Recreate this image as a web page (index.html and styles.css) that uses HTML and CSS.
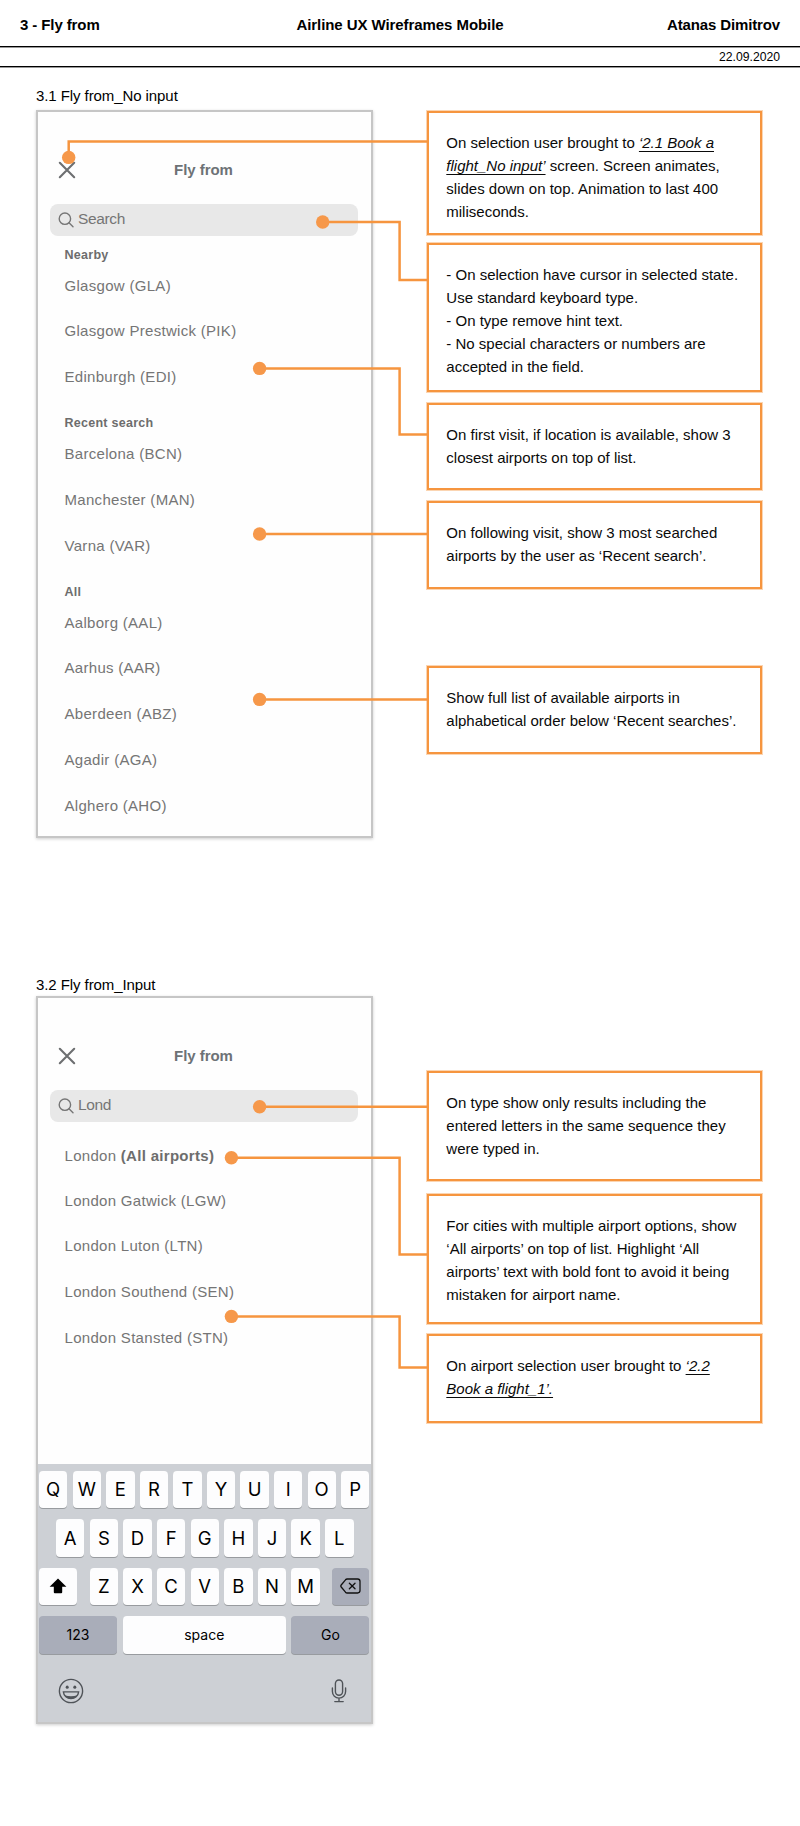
FILE: index.html
```html
<!DOCTYPE html>
<html lang="en">
<head>
<meta charset="utf-8">
<title>Airline UX Wireframes Mobile</title>
<link rel="stylesheet" href="styles.css">
</head>
<body>
<div class="page">
  <header class="head">
    <span class="head-left">3 - Fly from</span>
    <span class="head-mid">Airline UX Wireframes Mobile</span>
    <span class="head-right">Atanas Dimitrov</span>
  </header>
  <div class="date">22.09.2020</div>

  <section class="spec spec-a">
    <div class="screen-col">
      <h2 class="label">3.1 Fly from_No input</h2>
      <div class="phone">
        <div class="bar">
          <svg class="close" viewBox="0 0 18 18"><path d="M1.8 1.8 16.2 16.2M16.2 1.8 1.8 16.2"/></svg>
          <span class="title">Fly from</span>
        </div>
        <div class="search">
          <svg class="glass" viewBox="0 0 16 16"><circle cx="6.9" cy="6.7" r="5.7"/><path d="M11 10.8 15 14.8"/></svg>
          <span>Search</span>
        </div>
        <div class="group"><h3>Nearby</h3><p>Glasgow (GLA)</p><p>Glasgow Prestwick (PIK)</p><p>Edinburgh (EDI)</p></div>
        <div class="group"><h3>Recent search</h3><p>Barcelona (BCN)</p><p>Manchester (MAN)</p><p>Varna (VAR)</p></div>
        <div class="group"><h3>All</h3><p>Aalborg (AAL)</p><p>Aarhus (AAR)</p><p>Aberdeen (ABZ)</p><p>Agadir (AGA)</p><p>Alghero (AHO)</p></div>
      </div>
    </div>
    <div class="notes">
      <div class="note n1">On selection user brought to <em>‘2.1 Book a<br>flight_No input’</em> screen. Screen animates,<br>slides down on top. Animation to last 400<br>miliseconds.</div>
      <div class="note n2">- On selection have cursor in selected state.<br>Use standard keyboard type.<br>- On type remove hint text.<br>- No special characters or numbers are<br>accepted in the field.</div>
      <div class="note n3">On first visit, if location is available, show 3<br>closest airports on top of list.</div>
      <div class="note n4">On following visit, show 3 most searched<br>airports by the user as ‘Recent search’.</div>
      <div class="note n5">Show full list of available airports in<br>alphabetical order below ‘Recent searches’.</div>
    </div>
  </section>

  <section class="spec spec-b">
    <div class="screen-col">
      <h2 class="label">3.2 Fly from_Input</h2>
      <div class="phone">
        <div class="bar">
          <svg class="close" viewBox="0 0 18 18"><path d="M1.8 1.8 16.2 16.2M16.2 1.8 1.8 16.2"/></svg>
          <span class="title">Fly from</span>
        </div>
        <div class="search">
          <svg class="glass" viewBox="0 0 16 16"><circle cx="6.9" cy="6.7" r="5.7"/><path d="M11 10.8 15 14.8"/></svg>
          <span>Lond</span>
        </div>
        <div class="group results"><p class="first">London <b>(All airports)</b></p><p>London Gatwick (LGW)</p><p>London Luton (LTN)</p><p>London Southend (SEN)</p><p>London Stansted (STN)</p></div>
        <div class="keyboard">
          <div class="row"><kbd>Q</kbd><kbd>W</kbd><kbd>E</kbd><kbd>R</kbd><kbd>T</kbd><kbd>Y</kbd><kbd>U</kbd><kbd>I</kbd><kbd>O</kbd><kbd>P</kbd></div>
          <div class="row center"><kbd>A</kbd><kbd>S</kbd><kbd>D</kbd><kbd>F</kbd><kbd>G</kbd><kbd>H</kbd><kbd>J</kbd><kbd>K</kbd><kbd>L</kbd></div>
          <div class="row">
            <kbd class="side"><svg class="shift" viewBox="0 0 18 16"><path d="M9 .5 17.4 8.7H13.200V14.2Q13.200 15.2 12.200 15.2H5.800Q4.800 15.2 4.800 14.2V8.7H.6Z"/></svg></kbd>
            <div class="letters"><kbd>Z</kbd><kbd>X</kbd><kbd>C</kbd><kbd>V</kbd><kbd>B</kbd><kbd>N</kbd><kbd>M</kbd></div>
            <kbd class="side dark"><svg class="del" viewBox="0 0 21 16"><path d="M7.2 1H17.6Q20 1 20 3.4V12.6Q20 15 17.6 15H7.2Q6.2 15 5.5 14.2L1.2 9Q.4 8 1.2 7L5.5 1.8Q6.2 1 7.2 1ZM9.4 5.2 15 10.8M15 5.2 9.4 10.8"/></svg></kbd>
          </div>
          <div class="row"><kbd class="wide dark">123</kbd><kbd class="space">space</kbd><kbd class="wide dark">Go</kbd></div>
          <div class="tools">
            <svg class="smile" viewBox="0 0 26 26"><circle cx="13" cy="13" r="11.600"/><ellipse class="fill" cx="9.2" cy="9.2" rx="1.5" ry="1.6"/><ellipse class="fill" cx="16.8" cy="9.2" rx="1.5" ry="1.6"/><path d="M5.4 13.9H20.6C20.2 18 17 20.6 13 20.6S5.8 18 5.4 13.9Z"/><path class="fill" d="M6.6 17.2Q13 19.3 19.4 17.2C18.2 19.5 16 20.6 13 20.6S7.8 19.5 6.6 17.2Z"/></svg>
            <svg class="mic" viewBox="0 0 16 24"><rect x="4.4" y="1" width="7.2" height="15.200" rx="3.6"/><path d="M1.4 9V12.5A6.6 6.600 0 0 0 14.6 12.5V9M8 19.2V22.6M3.8 22.6H12.2"/></svg>
          </div>
        </div>
      </div>
    </div>
    <div class="notes notes-b">
      <div class="note n6">On type show only results including the<br>entered letters in the same sequence they<br>were typed in.</div>
      <div class="note n7">For cities with multiple airport options, show<br>‘All airports’ on top of list. Highlight ‘All<br>airports’ text with bold font to avoid it being<br>mistaken for airport name.</div>
      <div class="note n8">On airport selection user brought to <em>‘2.2<br>Book a flight_1’.</em></div>
    </div>
  </section>

  <svg class="links" viewBox="0 0 800 1826">
    <path d="M68.7 157V141.5H427M322.7 222H399.6V280H427M259.6 368.4H399.6V434.4H427M259.6 534H427M259.6 699.4H427M259.6 1106.7H427M231.4 1157.8H399.6V1254.4H427M231.4 1316.4H399.6V1367.6H427"/>
    <circle cx="68.7" cy="157.4" r="6.7"/><circle cx="322.7" cy="222" r="6.7"/><circle cx="259.6" cy="368.4" r="6.7"/><circle cx="259.6" cy="534" r="6.7"/><circle cx="259.6" cy="699.4" r="6.7"/><circle cx="259.6" cy="1106.7" r="6.7"/><circle cx="231.4" cy="1157.8" r="6.7"/><circle cx="231.4" cy="1316.4" r="6.7"/>
  </svg>
</div>
</body>
</html>
```
FILE: styles.css
```css
* { box-sizing: border-box; margin: 0; padding: 0; }
body { background: #fff; font-family: "Liberation Sans", Arial, sans-serif; font-size: 15px; color: #000; }
.page { position: relative; width: 800px; height: 1826px; overflow: hidden; }

.head { display: grid; grid-template-columns: 1fr auto 1fr; height: 47px; padding: 0 20px; line-height: 50px; font-weight: bold; letter-spacing: -0.1px; border-bottom: 1px solid #000; box-shadow: 0 1px 0 rgba(0,0,0,.4); }
.head-mid { letter-spacing: -0.07px; }
.head-right { text-align: right; letter-spacing: -0.14px; }
.date { height: 20px; padding-right: 20px; line-height: 20px; font-size: 12.2px; text-align: right; border-bottom: 1px solid #000; box-shadow: 0 1px 0 rgba(0,0,0,.4); }

.spec { display: flex; align-items: flex-start; padding-left: 36px; }
.spec-a { height: 887px; padding-top: 19px; }
.spec-b { padding-top: 21px; }
.screen-col { width: 337px; margin-right: 54px; }
.label { height: 24px; line-height: 20px; font-size: 15px; font-weight: normal; letter-spacing: -0.08px; white-space: nowrap; }
.spec-b .label { height: 21px; }

.phone { display: flex; flex-direction: column; height: 728px; border: 2px solid #c6c6c6; background: #fefefe; box-shadow: 0 1px 3px rgba(0,0,0,.2); }
.bar { display: grid; grid-template-columns: 1fr auto 1fr; align-items: center; flex: none; height: 36px; margin-top: 40px; padding-left: 20px; color: #6d7276; }
.close { width: 18px; height: 18px; fill: none; stroke: #6d6f71; stroke-width: 2.1; stroke-linecap: round; }
.bar .title { margin-left: -22px; padding-bottom: 2px; font-weight: bold; letter-spacing: -0.05px; }
.search { display: flex; align-items: center; flex: none; width: 308px; height: 32px; margin: 16px 0 0 12px; padding-left: 8px; gap: 4px; border-radius: 8px; background: #e8e8e8; color: #757575; font-size: 15.5px; letter-spacing: -0.35px; line-height: 30px; }
.search span { padding-bottom: 2px; }
.glass { width: 16px; height: 16px; fill: none; stroke: #757575; stroke-width: 1.4; stroke-linecap: round; }
.group { flex: none; margin: 11.8px 0 4.8px 26.5px; color: #757575; letter-spacing: .3px; }
.group h3 { height: 14.9px; line-height: 14.9px; font-size: 12.5px; letter-spacing: .27px; color: #6d6d6d; }
.group p { height: 45.7px; line-height: 45.7px; white-space: nowrap; }
.results .first { height: 44px; line-height: 44px; }
.results b { color: #6d6d6d; }

.notes { width: 335px; padding-top: 25px; }
.notes-b { padding-top: 96px; }
.note { padding: 19.2px 0 0 17.3px; border: 2px solid #f6953f; box-shadow: 0 0 0 1px rgba(246,149,63,.4); line-height: 22.9px; color: #0a0a0a; white-space: nowrap; }
.note em { text-decoration: underline; text-decoration-thickness: 1px; text-underline-offset: 3px; }
.n1 { height: 124px; }
.n2 { height: 149px; margin-top: 8px; }
.n3 { height: 87px; margin-top: 11px; }
.n4 { height: 88px; margin-top: 11px; }
.n5 { height: 88px; margin-top: 77px; }
.n6 { height: 110px; }
.n7 { height: 130px; margin-top: 13px; }
.n8 { height: 89px; margin-top: 10px; }

.links { position: absolute; left: 0; top: 0; width: 800px; height: 1826px; pointer-events: none; }
.links path { fill: none; stroke: #f6953f; stroke-width: 2.5; }
.links circle { fill: #f6984a; }

.keyboard { display: flex; flex-direction: column; gap: 10.8px; height: 258px; margin-top: auto; padding: 6.6px 1.5px 0 1px; background: #cdd0d5; font-family: Inter, sans-serif; color: #000; }
.row { display: flex; justify-content: space-between; height: 37.7px; }
.center { justify-content: center; gap: 5.25px; padding-left: 1px; }
.letters { display: flex; gap: 5.25px; padding-left: 1px; }
kbd { display: flex; align-items: center; justify-content: center; width: 28.4px; height: 37.7px; border-radius: 4px; background: #fdfdfe; box-shadow: 0 1px 0 #989b9f; font-family: inherit; font-size: 18.5px; }
.side { width: 37.6px; }
.wide { width: 78px; font-size: 14px; }
.space { width: 163.3px; font-size: 14px; }
.dark { background: #a9adb9; }
.shift { width: 18px; height: 16px; }
.del { width: 21px; height: 16px; fill: none; stroke: #111; stroke-width: 1.3; stroke-linecap: round; }
.tools { display: flex; justify-content: space-between; align-items: center; height: 26px; margin-top: 13.5px; padding: 0 22.5px 0 19px; }
.smile, .mic { fill: none; stroke: #4f5358; stroke-width: 1.4; stroke-linecap: round; }
.smile { width: 26px; height: 26px; }
.smile .fill { fill: #4f5358; stroke: none; }
.mic { width: 16px; height: 24px; }
```
